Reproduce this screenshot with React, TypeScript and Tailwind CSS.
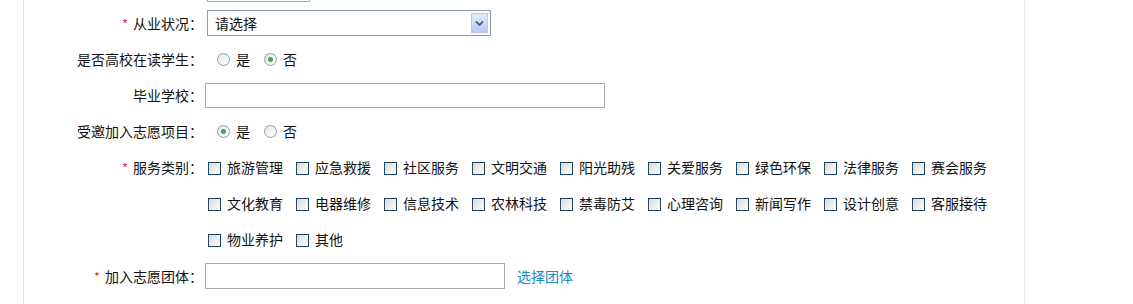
const services = [
  "旅游管理", "应急救援", "社区服务", "文明交通", "阳光助残", "关爱服务", "绿色环保", "法律服务", "赛会服务",
  "文化教育", "电器维修", "信息技术", "农林科技", "禁毒防艾", "心理咨询", "新闻写作", "设计创意", "客服接待",
  "物业养护", "其他",
];

function Label({ text, required }: { text: string; required?: boolean }) {
  return (
    <div className="w-[179px] shrink-0 text-right">
      {required && <span className="text-[#e23b3b] mr-[5px] text-[13px]">*</span>}
      {text}
    </div>
  );
}

function Radio({ checked }: { checked?: boolean }) {
  return (
    <span className="w-[13px] h-[13px] rounded-full border border-[#8e9bab] bg-gradient-to-br from-[#e4e6e9] to-white flex items-center justify-center shrink-0">
      {checked && <span className="w-[5px] h-[5px] rounded-full bg-[#3fa83a]" />}
    </span>
  );
}

function Checkbox() {
  return <span className="w-[13px] h-[13px] border border-[#1f4466] bg-gradient-to-br from-[#d9d9d5] to-white shrink-0" />;
}

function YesNo({ yes }: { yes: boolean }) {
  return (
    <div className="flex items-center ml-[14px]">
      <Radio checked={yes} />
      <span className="ml-[6px]">是</span>
      <span className="ml-[14px]">
        <Radio checked={!yes} />
      </span>
      <span className="ml-[6px]">否</span>
    </div>
  );
}

export default function App() {
  return (
    <div className="w-[1133px] h-[304px] bg-white overflow-hidden text-[14px] text-[#111] font-['Noto_Sans_CJK_SC',sans-serif]">
      <div className="ml-[17px] h-full border-l border-[#f5f5f5]">
        <div className="ml-[5px] w-[1002px] h-full border-l border-r border-[#e6e6e6]">
          <div className="ml-[183px] w-[103px] h-[2px] border-x border-b border-[#a5acb2]" />
          <div className="mt-[3px] flex items-center h-[36px]">
            <Label text="从业状况：" required />
            <div className="ml-[4px] w-[284px] h-[26px] border border-[#8b9bb0] flex items-center justify-between pl-[7px] pr-[2px]">
              <span>请选择</span>
              <span className="w-[17px] h-[20px] border border-[#b9c9ec] bg-gradient-to-b from-[#e3eafb] to-[#b9cbf1] flex items-center justify-center">
                <svg width="9" height="7" viewBox="0 0 9 7">
                  <path d="M1 1.5 L4.5 5 L8 1.5" stroke="#4a5d83" strokeWidth="1.8" fill="none" />
                </svg>
              </span>
            </div>
          </div>
          <div className="flex items-center h-[36px]">
            <Label text="是否高校在读学生：" />
            <YesNo yes={false} />
          </div>
          <div className="flex items-center h-[36px]">
            <Label text="毕业学校：" />
            <div className="ml-[2px] w-[400px] h-[25px] border border-[#a5acb2]" />
          </div>
          <div className="flex items-center h-[36px]">
            <Label text="受邀加入志愿项目：" />
            <YesNo yes={true} />
          </div>
          <div className="flex">
            <div className="h-[36px] flex items-center">
              <Label text="服务类别：" required />
            </div>
            <div className="ml-[5px] w-[800px] flex flex-wrap">
              {services.map((s) => (
                <div key={s} className="w-[88px] h-[36px] flex items-center">
                  <span className="mt-[3px] flex">
                    <Checkbox />
                  </span>
                  <span className="ml-[6px]">{s}</span>
                </div>
              ))}
            </div>
          </div>
          <div className="mt-[1px] flex items-center h-[36px]">
            <Label text="加入志愿团体：" required />
            <div className="ml-[2px] w-[300px] h-[26px] border border-[#a5acb2]" />
            <span className="ml-[12px] text-[#1b8bc5]">选择团体</span>
          </div>
        </div>
      </div>
    </div>
  );
}
